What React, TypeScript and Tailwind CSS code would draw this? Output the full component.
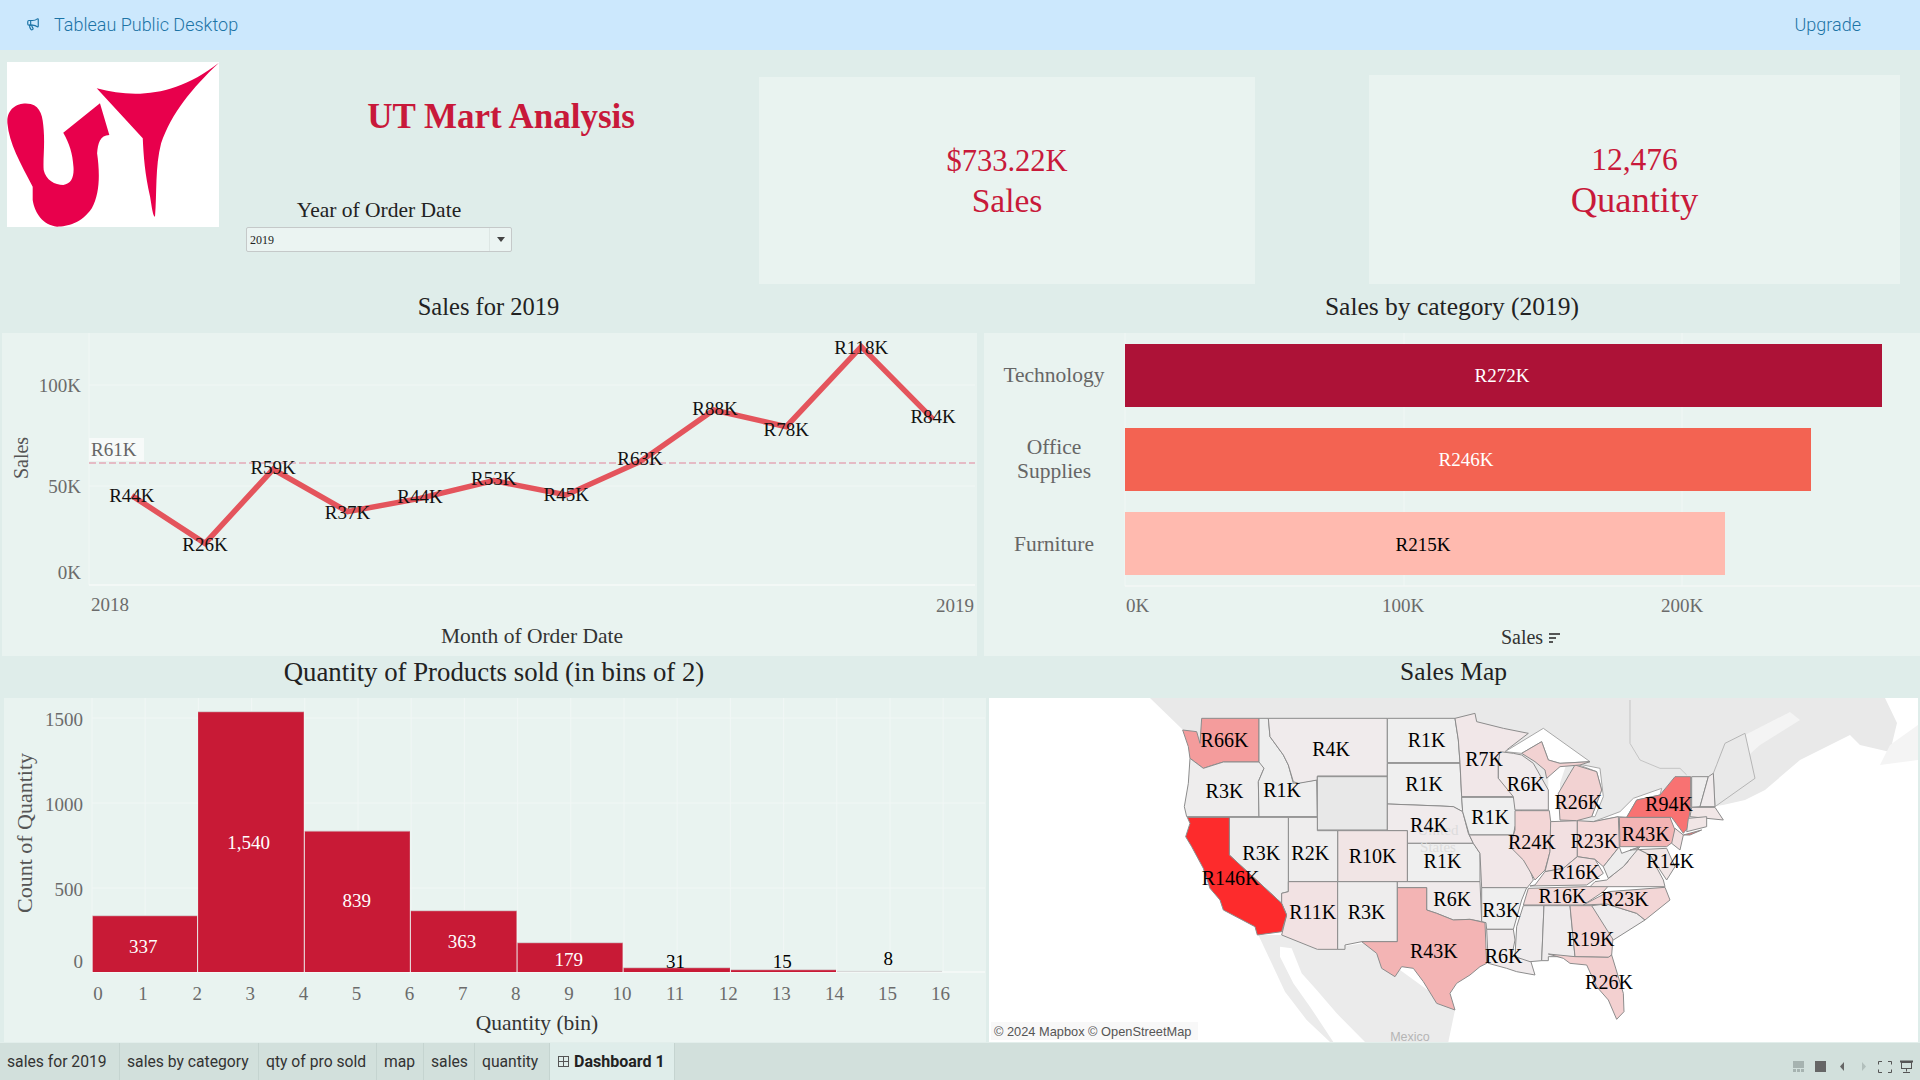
import React from "react";
import { Megaphone } from "lucide-react";

const SERIF = { fontFamily: '"Liberation Serif", serif' };

type TP = { x: number; y: number; s?: number; c?: string; a?: "start" | "middle" | "end"; r?: number; children: React.ReactNode };
const T = ({ x, y, s = 20, c = "#111", a = "middle", r, children }: TP) => (
  <text x={x} y={y} fontSize={s} fill={c} textAnchor={a} dominantBaseline="central" transform={r ? `rotate(${r} ${x} ${y})` : undefined} style={SERIF}>
    {children}
  </text>
);

const linePts: [number, number, string, number, number][] = [
  [211, 497, "R44K", 211, 497], [328, 640, "R26K", 328, 642], [437, 418, "R59K", 437, 412], [556, 545, "R37K", 556, 547],
  [672, 505, "R44K", 672, 500], [790, 452, "R53K", 790, 445], [906, 495, "R45K", 906, 493], [1024, 395, "R63K", 1024, 385],
  [1142, 240, "R88K", 1144, 235], [1258, 290, "R78K", 1258, 298], [1378, 50, "R118K", 1378, 52], [1493, 268, "R84K", 1493, 260],
];
const lx = (x: number) => x / 1.6;
const ly = (y: number) => y / 3 + 330;

function LineChart() {
  return (
    <svg viewBox="2 333 975 323" className="block w-full h-full">
      <line x1={89} x2={975} y1={385} y2={385} stroke="#f1f7f5" />
      <line x1={89} x2={975} y1={486} y2={486} stroke="#f1f7f5" />
      <line x1={89} x2={89} y1={333} y2={585} stroke="#f1f7f5" />
      <line x1={89} x2={975} y1={585} y2={585} stroke="#f6faf9" strokeWidth={1.5} />
      <T x={81} y={385} s={19} c="#6b6b6b" a="end">100K</T>
      <T x={81} y={486} s={19} c="#6b6b6b" a="end">50K</T>
      <T x={81} y={572} s={19} c="#6b6b6b" a="end">0K</T>
      <T x={21} y={458} s={20} c="#555" r={-90}>Sales</T>
      <rect x={89} y={438} width={55} height={23} fill="#f7faf9" />
      <T x={91} y={449} s={19} c="#666" a="start">R61K</T>
      <line x1={89} x2={975} y1={463} y2={463} stroke="#e3a9b6" strokeWidth={1.6} strokeDasharray="7 3" />
      <polyline points={linePts.map((p) => `${lx(p[0])},${ly(p[1])}`).join(" ")} fill="none" stroke="#e4545c" strokeWidth={5.5} strokeLinejoin="miter" />
      {linePts.map((p, i) => (
        <T key={i} x={lx(p[3])} y={ly(p[4])} s={19}>{p[2]}</T>
      ))}
      <T x={91} y={604} s={19} c="#6b6b6b" a="start">2018</T>
      <T x={974} y={605} s={19} c="#6b6b6b" a="end">2019</T>
      <T x={532} y={636} s={21.5} c="#333">Month of Order Date</T>
    </svg>
  );
}

function BarChart() {
  return (
    <svg viewBox="984 333 936 323" className="block w-full h-full">
      <line x1={1125} x2={1125} y1={333} y2={586} stroke="#f1f7f5" />
      <line x1={1404} x2={1404} y1={333} y2={586} stroke="#f1f7f5" />
      <line x1={1682} x2={1682} y1={333} y2={586} stroke="#f1f7f5" />
      <line x1={1125} x2={1920} y1={586} y2={586} stroke="#f3f7f6" strokeWidth={1.5} />
      <rect x={1125} y={344} width={757} height={63} fill="#ad1237" />
      <rect x={1125} y={428} width={686} height={63} fill="#f36352" />
      <rect x={1125} y={512} width={600} height={63} fill="#ffbaaf" />
      <T x={1502} y={375} s={19} c="#fff">R272K</T>
      <T x={1466} y={459} s={19} c="#fff">R246K</T>
      <T x={1423} y={544} s={19} c="#000">R215K</T>
      <T x={1054} y={375} s={21.5} c="#666">Technology</T>
      <T x={1054} y={447} s={21.5} c="#666">Office</T>
      <T x={1054} y={471} s={21.5} c="#666">Supplies</T>
      <T x={1054} y={544} s={21.5} c="#666">Furniture</T>
      <T x={1126} y={605} s={19} c="#6b6b6b" a="start">0K</T>
      <T x={1403} y={605} s={19} c="#6b6b6b">100K</T>
      <T x={1682} y={605} s={19} c="#6b6b6b">200K</T>
      <T x={1522} y={637} s={20} c="#333">Sales</T>
      <g fill="#555">
        <rect x={1549} y={633} width={11} height={2} />
        <rect x={1549} y={637} width={7} height={2} />
        <rect x={1549} y={641} width={4} height={2} />
      </g>
    </svg>
  );
}

const hx = (x: number) => x / 1.584;
const hy = (y: number) => y / 3 + 660;
const bars: [number, number, number, string, number, number, string][] = [
  [146, 313, 767, "337", 227, 860, "#fff"], [313, 482, 155, "1,540", 394, 548, "#fff"], [482, 650, 513, "839", 565, 722, "#fff"],
  [650, 819, 752, "363", 732, 843, "#fff"], [819, 987, 848, "179", 901, 897, "#fff"], [987, 1157, 923, "31", 1070, 903, "#000"],
  [1157, 1325, 929, "15", 1239, 905, "#000"], [1325, 1493, 934, "8", 1407, 895, "#000"],
];

function Histogram() {
  const ticks = Array.from({ length: 17 }, (_, i) => i);
  return (
    <svg viewBox="4 698 982 344" className="block w-full h-full">
      {ticks.map((i) => (
        <line key={i} x1={92 + i * 53.2} x2={92 + i * 53.2} y1={698} y2={972} stroke="#f1f7f5" />
      ))}
      {[718, 803, 888].map((y) => (
        <line key={y} x1={92} x2={985} y1={y} y2={y} stroke="#f1f7f5" />
      ))}
      <line x1={92} x2={985} y1={972} y2={972} stroke="#f6faf9" strokeWidth={1.5} />
      {bars.map((b, i) => (
        <g key={i}>
          <rect x={hx(b[0]) + 0.5} y={hy(b[2])} width={hx(b[1]) - hx(b[0]) - 1} height={972 - hy(b[2])} fill={i === 7 ? "#cfcfcf" : "#c81a36"} />
          <line x1={hx(b[0]) + 0.5} x2={hx(b[1]) - 0.5} y1={hy(b[2])} y2={hy(b[2])} stroke="#d8d8d8" strokeWidth={1} />
        </g>
      ))}
      {bars.map((b, i) => (
        <T key={i} x={hx(b[4])} y={hy(b[5])} s={19} c={b[6]}>{b[3]}</T>
      ))}
      <T x={83} y={719} s={19} c="#6b6b6b" a="end">1500</T>
      <T x={83} y={804} s={19} c="#6b6b6b" a="end">1000</T>
      <T x={83} y={889} s={19} c="#6b6b6b" a="end">500</T>
      <T x={83} y={961} s={19} c="#6b6b6b" a="end">0</T>
      <T x={24} y={833} s={22} c="#555" r={-90}>Count of Quantity</T>
      {ticks.map((i) => (
        <T key={i} x={i === 0 ? 98 : 91 + i * 53.1 - (i === 1 ? 1 : 0)} y={993} s={19} c="#6b6b6b">{i}</T>
      ))}
      <T x={537} y={1023} s={21.5} c="#333">Quantity (bin)</T>
    </svg>
  );
}

const ST = "#8c8c8c";
const west: [string, string][] = [
  ["125,55 297,55 297,186 190,186 160,195 130,205 90,175 85,140 68,90 110,95 120,130", "#f49c9c"],
  ["90,175 130,205 190,186 305,186 312,205 295,245 297,350 80,350 73,320 85,250", "#eeeded"],
  ["297,55 325,55 330,110 370,165 385,195 400,250 470,240 472,350 297,350 295,245 312,205 297,186", "#eeeeee"],
  ["325,55 682,55 682,228 472,228 472,240 415,250 400,245 385,195 370,165 330,110", "#f0ebec"],
  ["472,230 682,230 682,390 472,390", "#e8e8e8"],
  ["682,55 885,55 895,120 900,188 682,188", "#efefef"],
  ["682,190 900,190 905,290 908,335 880,320 840,318 682,312", "#efefef"],
  ["682,312 840,318 880,320 908,335 925,400 940,430 742,430 742,392 682,392", "#f0ebec"],
  ["742,430 940,430 960,460 960,545 742,545", "#efefef"],
  ["533,392 742,392 742,545 533,545", "#f1e5e5"],
  ["385,352 472,352 472,392 533,392 533,545 385,545", "#eeeded"],
  ["208,352 385,352 385,575 365,580 365,610 208,465", "#eeeded"],
  ["385,545 533,545 533,748 472,748 365,705 380,645 365,610 365,580 385,575", "#f2e2e3"],
  ["533,545 712,545 712,725 605,725 555,735 555,748 533,748", "#eeeded"],
  ["712,545 960,545 965,665 930,658 880,660 830,640 800,630 800,563 712,563", "#f0eaeb"],
  ["885,55 945,40 950,65 1030,85 1105,100 1040,150 1015,190 1015,235 1060,270 1060,290 905,290 900,188 895,120", "#f1e7e8"],
  ["905,292 1060,292 1095,350 1065,380 1060,405 928,405 908,335", "#efefef"],
  ["928,405 1060,405 1065,440 1100,480 1120,540 1100,565 965,563 960,460 940,430", "#f1e7e8"],
  ["965,563 1100,563 1085,600 1060,688 980,688 978,668 965,665", "#efefef"],
  ["980,688 1060,688 1065,720 1055,770 1105,760 1125,825 1070,815 1040,805 985,790", "#f0ebec"],
  ["82,352 208,352 208,465 365,610 380,645 365,695 292,705 285,680 190,630 180,600 150,565 130,505 95,440 77,410 90,370", "#fd2b2c"],
  ["712,563 800,563 800,630 830,640 880,660 930,658 975,668 980,790 960,800 930,825 890,850 870,880 885,930 830,910 790,845 760,805 725,800 705,830 665,805 650,760 605,725 712,725", "#f3b4b4"],
];
const east: [string, string][] = [
  ["60,155 100,160 125,165 160,190 205,270 205,330 105,330 100,290 55,235 55,190", "#f0ebec"],
  ["105,332 208,332 212,365 210,455 195,510 165,540 130,480 90,440 105,390", "#f3d6d6"],
  ["212,365 292,362 292,470 250,505 195,515 210,455", "#f2e0e1"],
  ["292,362 340,365 415,350 418,440 370,500 345,478 292,470", "#f4d9d9"],
  ["240,360 235,280 270,220 285,195 350,215 365,270 335,350 290,362", "#f2d2d2"],
  ["125,160 185,125 205,180 240,190 330,185 300,195 240,200 200,235 195,210 165,185", "#f2d2d2"],
  ["165,555 195,515 250,505 292,470 345,478 370,520 320,555 150,558", "#f2e0e1"],
  ["145,565 385,558 370,575 310,615 130,615", "#f3dada"],
  ["130,617 192,617 185,782 150,785 105,770 110,680", "#efeced"],
  ["192,617 270,617 285,770 205,770 205,782 185,782", "#efeced"],
  ["270,617 335,617 400,700 395,765 385,772 285,770", "#f3d6d6"],
  ["205,762 285,770 385,772 395,765 430,880 432,935 410,958 385,900 350,860 320,795 270,790 250,775", "#f3d0d0"],
  ["335,617 380,612 470,640 495,660 400,720", "#efeced"],
  ["385,575 555,562 570,600 495,660 470,640 380,612 310,615", "#f3d6d6"],
  ["345,545 380,540 440,490 470,445 510,465 550,540 555,560 330,560", "#f1e6e6"],
  ["370,500 418,440 425,460 480,440 430,500 385,535", "#eeeded"],
  ["418,352 570,352 585,390 580,425 560,440 420,440", "#f3b4b4"],
  ["440,352 470,300 540,285 585,230 632,230 632,320 622,385 610,400 575,352", "#f87272"],
  ["610,405 665,390 630,405", "#f87272"],
  ["585,385 610,405 600,450 575,430", "#f2e0e1"],
  ["635,230 685,230 660,320 635,322", "#eeeded"],
  ["685,230 700,220 705,320 660,320", "#f0ebec"],
  ["635,322 705,322 730,360 630,350", "#f1e6e6"],
  ["625,355 680,350 680,380 620,395", "#f1e6e6"],
  ["450,450 560,445 585,500 560,540 510,465 470,445", "#f1e6e6"],
];
const mapLabels: [number, number, string][] = [
  [1000, 604, "R66K"], [1087, 612, "R4K"], [1165, 604, "R1K"], [1212, 620, "R7K"], [1000, 646, "R3K"], [1047, 645, "R1K"], [1163, 640, "R1K"],
  [1246, 640, "R6K"], [1167, 674, "R4K"], [1217, 667, "R1K"], [1289, 655, "R26K"], [1363, 657, "R94K"], [1344, 681, "R43K"], [1251, 688, "R24K"],
  [1302, 687, "R23K"], [1030, 697, "R3K"], [1070, 697, "R2K"], [1121, 699, "R10K"], [1178, 703, "R1K"], [1287, 712, "R16K"], [1364, 703, "R14K"],
  [1005, 717, "R146K"], [1276, 732, "R16K"], [1327, 734, "R23K"], [1186, 734, "R6K"], [1226, 743, "R3K"], [1072, 745, "R11K"], [1116, 745, "R3K"],
  [1171, 777, "R43K"], [1228, 781, "R6K"], [1299, 767, "R19K"], [1314, 802, "R26K"],
];

function MapChart() {
  return (
    <svg viewBox="989 698 929 344" className="block w-full h-full">
      <rect x={989} y={698} width={929} height={344} fill="#fff" />
      <polygon fill="#e9e9e9" points="1150,698 1885,698 1897,723 1890,752 1860,745 1850,735 1800,760 1765,790 1745,800 1723,805 1400,850 1220,800 1183,730" />
      <polygon fill="#f4f4f4" points="1715,765 1745,735 1790,712 1800,720 1760,745 1732,770" />
      <polygon fill="#f4f4f4" points="1880,765 1890,745 1918,725 1918,760" />
      <g transform="translate(1230 920) scale(0.33333)">
        <polygon fill="#ebebeb" points="85,45 160,45 265,90 400,70 675,270 655,366 405,366 320,280 260,210 215,160 185,85 150,80 150,110 190,190 240,260 310,366 300,366 230,300 165,215 125,130" />
      </g>
      <g transform="translate(1160 700) scale(0.33333)">
        {west.map((s, i) => (
          <polygon key={i} points={s[0]} fill={s[1]} stroke={ST} strokeWidth={3} strokeLinejoin="round" />
        ))}
      </g>
      <g transform="translate(1480 700) scale(0.33333)">
        <polygon fill="#fff" stroke="#a8a8a8" strokeWidth={3} points="75,155 190,85 330,185 240,190 205,180 185,125 125,160" />
        <polygon fill="#fff" points="205,190 260,190 240,250 240,365 205,360" />
        <polygon fill="#fff" stroke="#a8a8a8" strokeWidth={3} points="285,190 360,205 370,290 345,350 335,350 365,270 350,215" />
        <polygon fill="#fff" stroke="#a8a8a8" strokeWidth={3} points="340,365 420,335 460,295 545,265 540,285 470,300 440,352 415,350" />
        <polyline points="450,0 450,130 480,180 540,205 600,205 620,225" fill="none" stroke="#c4c4c4" strokeWidth={3} />
        <polygon points="700,220 735,130 795,100 825,235 705,320" fill="#e9e9e9" stroke="#b5b5b5" strokeWidth={3} />
        {east.map((s, i) => (
          <polygon key={i} points={s[0]} fill={s[1]} stroke={ST} strokeWidth={3} strokeLinejoin="round" />
        ))}
      </g>
      <T x={1438} y={830} s={15} c="#dcdcdc">United</T>
      <T x={1438} y={847} s={15} c="#dcdcdc">States</T>
      {mapLabels.map((l, i) => (
        <T key={i} x={l[0] * 1.2245} y={l[1] * 1.2245} s={20} c="#000">{l[2]}</T>
      ))}
      <rect x={991} y={1022} width={207} height={18} fill="#f8f8f8" />
      <text x={994} y={1031} fontSize={12.8} fill="#555" dominantBaseline="central" style={{ fontFamily: '"Liberation Sans", sans-serif' }}>© 2024 Mapbox © OpenStreetMap</text>
      <text x={1410} y={1037} fontSize={12.5} fill="#b5b5b5" textAnchor="middle" dominantBaseline="central" style={{ fontFamily: '"Liberation Sans", sans-serif' }}>Mexico</text>
    </svg>
  );
}

function Logo() {
  return (
    <svg viewBox="17 186 520 495" preserveAspectRatio="none" className="block w-full h-full">
      <path fill="#e8004c" d="M18 370 C15 320 50 305 75 312 C100 320 105 350 107 390 C110 440 105 480 107 510 C112 540 135 555 155 555 C175 552 182 530 180 500 C178 460 170 430 155 398 L245 310 L268 405 C245 405 240 430 238 460 C245 520 245 580 225 625 C200 670 165 680 140 680 C105 675 85 640 80 600 L80 560 C50 490 22 430 18 370 Z" />
      <path fill="#e8004c" d="M237 265 C330 295 430 290 537 188 C470 265 420 340 395 430 C380 500 385 580 380 650 C375 650 372 620 368 590 C355 520 352 470 350 415 Z" />
    </svg>
  );
}

const tabs: [string, string][] = [
  ["sales for 2019", "w-[120px]"],
  ["sales by category", "w-[139px]"],
  ["qty of pro sold", "w-[118px]"],
  ["map", "w-[47px]"],
  ["sales", "w-[51px]"],
  ["quantity", "w-[75px]"],
];

export default function App() {
  return (
    <div className="w-[1920px] h-[1080px] flex flex-col overflow-hidden bg-[#dfedea] text-[#222]" style={SERIF}>
      <header className="h-[50px] shrink-0 bg-[#cce8fd] flex items-center pl-[26px] pr-[59px] pb-[2px] text-[#1c74a6] font-['Roboto',sans-serif] font-light text-[18px]">
        <Megaphone size={14} strokeWidth={2} className="mr-[14px]" />
        <span>Tableau Public Desktop</span>
        <span className="ml-auto">Upgrade</span>
      </header>

      <section className="h-[240px] shrink-0 flex items-start">
        <div className="ml-[7px] mt-[12px] w-[212px] h-[165px] bg-white shrink-0">
          <Logo />
        </div>
        <div className="ml-[27px] w-[513px] shrink-0 flex flex-col">
          <h1 className="mt-[47px] h-[40px] leading-[40px] text-center text-[35px] font-bold text-[#c8193a] pr-[3px]">UT Mart Analysis</h1>
          <div className="w-[266px] mt-[61px] text-center text-[21.5px] leading-[24px]">Year of Order Date</div>
          <div className="w-[266px] h-[25px] mt-[5px] flex items-center bg-[#ebf4f2] border border-[#c5c9c9] rounded-[2px] text-[12px] text-[#222]">
            <span className="flex-1 pl-[3px]">2019</span>
            <span className="w-[22px] h-full flex items-center justify-center border-l border-[#dde6e4]">
              <span className="w-0 h-0 border-l-[4px] border-r-[4px] border-t-[5px] border-l-transparent border-r-transparent border-t-[#444]" />
            </span>
          </div>
        </div>
        <div className="mt-[27px] w-[496px] h-[207px] shrink-0 bg-[#e9f3f0] flex flex-col items-center justify-center text-[#c8193a] text-[33.5px] leading-[40px]">
          <span className="text-[30.5px]">$733.22K</span>
          <span>Sales</span>
        </div>
        <div className="ml-[114px] mt-[25px] w-[531px] h-[209px] shrink-0 bg-[#e9f3f0] flex flex-col items-center justify-center text-[#c8193a] text-[36.5px] leading-[40px]">
          <span className="text-[31.5px]">12,476</span>
          <span>Quantity</span>
        </div>
      </section>

      <div className="h-[43px] shrink-0 flex items-center pb-[9px] text-[#222]">
        <div className="w-[977px] text-center text-[24.5px]">Sales for 2019</div>
        <div className="ml-[7px] w-[936px] text-center text-[25.5px]">Sales by category (2019)</div>
      </div>

      <div className="h-[323px] shrink-0 flex pl-[2px] gap-[7px]">
        <div className="w-[975px] h-full bg-[#e9f3f0]"><LineChart /></div>
        <div className="w-[936px] h-full bg-[#e9f3f0]"><BarChart /></div>
      </div>

      <div className="h-[42px] shrink-0 flex items-center pb-[9px] text-[#222]">
        <div className="w-[988px] text-center text-[26.8px]">Quantity of Products sold (in bins of 2)</div>
        <div className="ml-[1px] w-[929px] text-center text-[25.5px]">Sales Map</div>
      </div>

      <div className="h-[344px] shrink-0 flex">
        <div className="ml-[4px] w-[982px] h-full bg-[#e9f3f0]"><Histogram /></div>
        <div className="ml-[3px] w-[929px] h-full"><MapChart /></div>
      </div>

      <footer className="flex-1 flex items-stretch bg-[#d2e0dc] border-t border-[#e2eeeb] font-['Roboto',sans-serif] text-[15.7px] text-[#333]">
        {tabs.map(([t, w]) => (
          <div key={t} className={`${w} flex items-center pl-[7px] border-r border-[#c5d4d0] whitespace-nowrap`}>{t}</div>
        ))}
        <div className="w-[125px] flex items-center pl-[8px] gap-[5px] bg-[#dfedea] border-r border-[#c5d4d0] font-bold text-[16px] text-[#222] whitespace-nowrap">
          <svg width="11" height="11" viewBox="0 0 11 11" fill="none" stroke="#555" className="shrink-0">
            <rect x="0.5" y="0.5" width="10" height="10" />
            <path d="M5.5 0.5V10.5M0.5 5.5H10.5" />
          </svg>
          <span>Dashboard 1</span>
        </div>
        <div className="ml-auto flex items-center pr-[7px] pt-[10px]">
          <svg width="11" height="11" viewBox="0 0 11 11" fill="#a6b3b0">
            <rect width="11" height="7" />
            <rect y="8" width="3" height="3" /><rect x="4" y="8" width="3" height="3" /><rect x="8" y="8" width="3" height="3" />
          </svg>
          <span className="w-[11px] h-[11px] bg-[#666] ml-[11px]" />
          <svg width="4" height="9" viewBox="0 0 4 9" fill="#666" className="ml-[14px]"><path d="M4 0V9L0 4.5Z" /></svg>
          <svg width="4" height="9" viewBox="0 0 4 9" fill="#b2bfbc" className="ml-[18px]"><path d="M0 0V9L4 4.5Z" /></svg>
          <svg width="14" height="12" viewBox="0 0 14 12" fill="none" stroke="#555" className="ml-[12px]">
            <path d="M0.5 3.5V0.5H4M10 0.5H13.5V3.5M13.5 8.5V11.5H10M4 11.5H0.5V8.5" />
          </svg>
          <svg width="13" height="13" viewBox="0 0 13 13" fill="none" stroke="#555" className="ml-[8px]">
            <path d="M0 1.5H13" strokeWidth="2" />
            <rect x="1.5" y="2.5" width="10" height="6" />
            <path d="M6.5 8.5V11.5M3 12.5H10" />
          </svg>
        </div>
      </footer>
    </div>
  );
}
